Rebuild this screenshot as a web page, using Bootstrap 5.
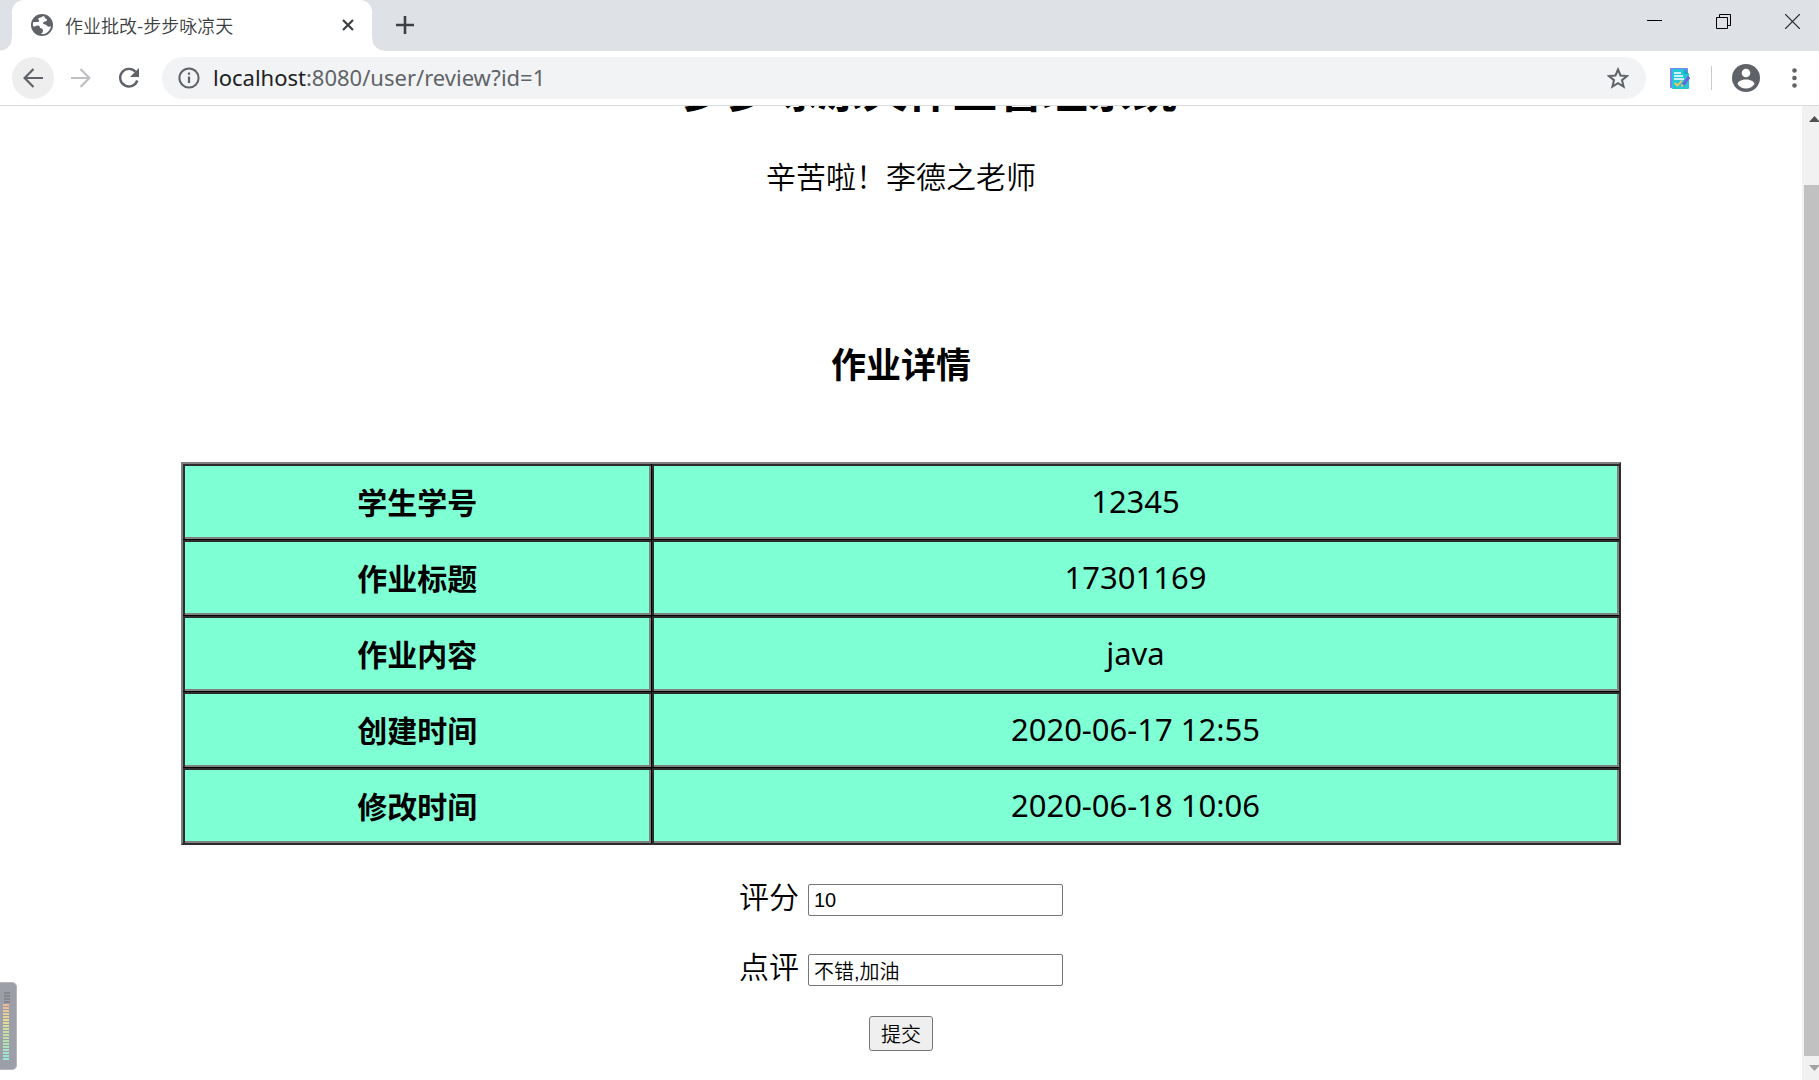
<!DOCTYPE html>
<html lang="zh-CN">
<head>
<meta charset="utf-8">
<meta name="viewport" content="width=device-width, initial-scale=1">
<title>作业批改-步步咏凉天</title>
<link href="https://cdn.jsdelivr.net/npm/bootstrap@5.3.0/dist/css/bootstrap.min.css" rel="stylesheet">
<style>
body{font-family:"Noto Sans CJK SC","Noto Sans",sans-serif;color:#000;background:#fff}
button{border:0;background:none;padding:0}
svg{display:block;flex:none}
.tabstrip{height:51px;background:#dee1e6;padding-left:12px}
.tab-item{width:360px;background:#fff;border-radius:12px 12px 0 0;padding:0 18px 2px 19px;position:relative}
.tab-item::before,.tab-item::after{content:"";position:absolute;bottom:0;width:12px;height:12px}
.tab-item::before{left:-12px;background:radial-gradient(circle at 0 0,#dee1e6 11px,#fff 12px)}
.tab-item::after{right:-12px;background:radial-gradient(circle at 100% 0,#dee1e6 11px,#fff 12px)}
.tab-title{font-size:18px;line-height:24px;font-weight:350;color:#3c4043;margin-left:12px}
.new-tab{margin-left:24px;padding-bottom:2px}
.win-controls{gap:54px;padding:14px 19px 0 0}
.toolbar{height:55px;border-bottom:1px solid #d8dadc;padding:6px 22px 6px 12px}
.round-btn{width:42px;height:42px;border-radius:50%;display:grid;place-items:center}
.round-btn.on{background:#eee}
.nav-buttons{gap:6px}
.omnibox{height:42px;border-radius:21px;background:#f1f3f4;margin-left:12px;padding:0 17px 0 16px}
.address{font:22px/28px "Noto Sans",sans-serif;color:#5f6368;text-decoration:none;margin-left:13px;padding-bottom:2px}
.address b{font-weight:400;color:#202124}
.tool-rule{margin-left:21px}
.view{overflow:hidden;min-height:0}
.page{margin-top:-47px}
.page h1{font-size:45px;line-height:60px;font-weight:700;margin:0;padding-left:58px}
.greeting{font-size:30px;line-height:40px;font-weight:350;margin:36px 0 144px}
.page h2{font-size:35px;line-height:48px;font-weight:700;margin:0 0 75px}
.detail{width:calc(80% - 2px);table-layout:fixed;border-collapse:separate;border-spacing:0;border:2px solid;border-color:#808080 #2c2c2c #2c2c2c #808080;background:#7fffd4;margin:0 auto 29px;font-size:30px;line-height:40px}
.detail th,.detail td{height:76px;padding:0 0 2px;vertical-align:middle;border:0 solid #000;border-top-width:1px;box-shadow:inset 2px 2px #2c2c2c,inset -2px -2px #808080}
.detail tr:first-child>*{border-top-width:0;height:75px}
.detail th{width:32.6%}
.detail td{border-left-width:1px;font-family:"Noto Sans",sans-serif;font-size:31px}
.field{gap:9px;height:42px;margin-bottom:28px}
.field label{font-size:30px;line-height:42px;font-weight:350}
.field input{width:255px;height:32px;border:1px solid #767676;border-radius:2px;padding:1px 5px;font:350 20px/28px "Liberation Sans","Noto Sans CJK SC",sans-serif;color:#000}
.submit{width:64px;height:35px;border:1px solid #767676;border-radius:3px;background:#efefef;font-size:20px;line-height:30px;font-weight:350;color:#000;margin-top:2px}
.scroll-rail{width:17px;background:#f1f1f1;padding:10px 0 9px 2px}
.scroll-thumb{background:#c1c1c1;margin:63px 0 9px}
.meter{position:absolute;left:0;bottom:10px;width:17px;height:88px;background:#9c9fa7;border:1px solid #b4b6bb;border-left:0;border-radius:0 5px 5px 0}
</style>
<script src="https://cdn.jsdelivr.net/npm/bootstrap@5.3.0/dist/js/bootstrap.bundle.min.js"></script>
</head>
<body class="vh-100 d-flex flex-column overflow-hidden position-relative">
<header class="flex-shrink-0">
  <div class="tabstrip d-flex">
    <div class="tab-item d-flex align-items-center">
      <svg width="22" height="22" viewBox="0 0 22 22"><circle cx="11" cy="11" r="11" fill="#5f6368"/><path d="M12 2c-1 2-4 1-5 3 1 1 2 2 0 3H2.300C1 13 3 13 5 12c3-1 4 0 4 2 2 0 3 1 3 3 0 2-2 2-2 3 5 1 9-3 10-8-1 1-3 1-4 0 0-2-4-1-4-3s4-1 4-3-3-1-2-3z" fill="#fff"/></svg>
      <span class="tab-title">作业批改-步步咏凉天</span>
      <button class="ms-auto" aria-label="关闭标签页"><svg width="12" height="12" viewBox="0 0 12 12"><path d="M1 1l10 10M11 1L1 11" stroke="#3c4043" stroke-width="2.200"/></svg></button>
    </div>
    <button class="new-tab" aria-label="新标签页"><svg width="18" height="18" viewBox="0 0 18 18"><path d="M9 0v18M0 9h18" stroke="#3c4043" stroke-width="2.600"/></svg></button>
    <div class="win-controls d-flex align-items-start ms-auto">
      <button aria-label="最小化"><svg width="15" height="15"><path d="M0 6.500h15" stroke="#000"/></svg></button>
      <button aria-label="还原"><svg width="15" height="15" fill="none" stroke="#000"><path d="M.5 3.500h11v11H.5zM3.500 3.500v-3h11v11h-3"/></svg></button>
      <button aria-label="关闭"><svg width="15" height="15"><path d="M0 0l15 15M15 0L0 15" stroke="#222" stroke-width="1.200"/></svg></button>
    </div>
  </div>
  <nav class="toolbar d-flex align-items-center" aria-label="导航">
    <div class="nav-buttons d-flex">
      <button class="round-btn on" aria-label="后退"><svg width="20" height="20" viewBox="0 0 20 20" fill="none" stroke="#5f6368" stroke-width="2.200"><path d="M20 10H2M10.500 1L1.600 10l8.900 9"/></svg></button>
      <button class="round-btn" aria-label="前进"><svg width="20" height="20" viewBox="0 0 20 20" fill="none" stroke="#bdbfc2" stroke-width="2.200"><path d="M0 10h18M9.500 1l8.900 9-8.900 9"/></svg></button>
      <button class="round-btn" aria-label="重新加载"><svg width="22" height="22" viewBox="0 0 22 22"><path d="M19.300 13.500A8.800 8.800 0 1 1 17.500 4.800" fill="none" stroke="#5f6368" stroke-width="2.400"/><path d="M21 1v9h-9z" fill="#5f6368"/></svg></button>
    </div>
    <div class="omnibox d-flex align-items-center flex-grow-1">
      <svg width="22" height="22" viewBox="0 0 22 22"><circle cx="11" cy="11" r="9.600" fill="none" stroke="#5f6368" stroke-width="2"/><path d="M11 9.500V16M11 5.500v2.200" stroke="#5f6368" stroke-width="2.200"/></svg>
      <a class="address" href="#"><b>localhost</b>:8080/user/review?id=1</a>
      <button class="ms-auto" aria-label="收藏"><svg width="22" height="22" viewBox="0 0 22 22"><path d="M11 2.500l2.500 6 6.500.5-5 4.200 1.600 6.400L11 16.100l-5.600 3.500L7 13.200 2 9l6.500-.5z" fill="none" stroke="#5f6368" stroke-width="2"/></svg></button>
    </div>
    <button class="ms-4" aria-label="扩展程序"><svg width="20" height="21" viewBox="0 0 20 21"><rect width="18" height="20" rx="1" fill="#7b84e8"/><path d="M2 1h12l5 5v14a1 1 0 0 1-1 1H3a1 1 0 0 1-1-1z" fill="#24c6d8"/><path d="M14 1l5 5h-5z" fill="#17a9bd"/><path d="M4 5h7M4 8h9M4 11h10" stroke="#fff" stroke-width="1.600"/><path d="M4.500 15l3 2.500 4.500-5" fill="none" stroke="#f8c955" stroke-width="1.700"/><path d="M13 17l6-8" stroke="#6c63d9" stroke-width="3"/><path d="M11 19l.6-3 2.400 1.500z" fill="#f8c955"/></svg></button>
    <svg class="tool-rule" width="1" height="24"><path d="M.5 0v24" stroke="#c8cace"/></svg>
    <button class="ms-3 ps-1" aria-label="用户"><svg width="28" height="28" viewBox="0 0 28 28"><circle cx="14" cy="14" r="14" fill="#5f6368"/><circle cx="14" cy="9" r="4.300" fill="#fff"/><path d="M5.500 20c1-6 16-6 17 0-4 6-13 6-17 0z" fill="#fff"/></svg></button>
    <button class="ms-4 ps-2" aria-label="菜单"><svg width="5" height="20" viewBox="0 0 5 20" fill="#5f6368"><circle cx="2.500" cy="2.500" r="2.300"/><circle cx="2.500" cy="10" r="2.300"/><circle cx="2.500" cy="17.500" r="2.300"/></svg></button>
  </nav>
</header>
<div class="view d-flex flex-grow-1">
  <main class="page flex-grow-1 text-center">
    <h1>步步咏凉天作业管理系统</h1>
    <p class="greeting">辛苦啦！李德之老师</p>
    <h2>作业详情</h2>
    <table class="detail">
      <tbody>
        <tr><th scope="row">学生学号</th><td>12345</td></tr>
        <tr><th scope="row">作业标题</th><td>17301169</td></tr>
        <tr><th scope="row">作业内容</th><td>java</td></tr>
        <tr><th scope="row">创建时间</th><td>2020-06-17 12:55</td></tr>
        <tr><th scope="row">修改时间</th><td>2020-06-18 10:06</td></tr>
      </tbody>
    </table>
    <form>
      <div class="field d-flex justify-content-center align-items-end"><label for="score">评分</label><input id="score" type="text" value="10"></div>
      <div class="field d-flex justify-content-center align-items-end"><label for="comment">点评</label><input id="comment" type="text" value="不错,加油"></div>
      <button class="submit" type="button">提交</button>
    </form>
  </main>
  <div class="scroll-rail d-flex flex-column flex-shrink-0" aria-hidden="true">
    <svg class="ms-auto" width="10" height="6"><path d="M0 6L5.500 0 11 6z" fill="#505050"/></svg>
    <div class="scroll-thumb flex-grow-1"></div>
    <svg class="ms-auto" width="10" height="6"><path d="M0 0L5.500 6 11 0z" fill="#a3a3a3"/></svg>
  </div>
</div>
<div class="meter" aria-hidden="true">
  <svg width="16" height="85">
    <defs><linearGradient id="lv" x1="0" y1="0" x2="0" y2="1"><stop offset="0" stop-color="#efb596"/><stop offset=".3" stop-color="#e6dc98"/><stop offset=".6" stop-color="#bfdfa5"/><stop offset="1" stop-color="#92e8dc"/></linearGradient>
    <pattern id="gap" width="15" height="3" patternUnits="userSpaceOnUse"><rect y="2" width="15" height="1" fill="#9c9fa7"/></pattern></defs>
    <rect x="4" y="9" width="6" height="11" fill="#85878e"/><rect x="3" y="21" width="6" height="56" fill="url(#lv)"/><rect width="15" height="85" fill="url(#gap)"/>
  </svg>
</div>
</body>
</html>
